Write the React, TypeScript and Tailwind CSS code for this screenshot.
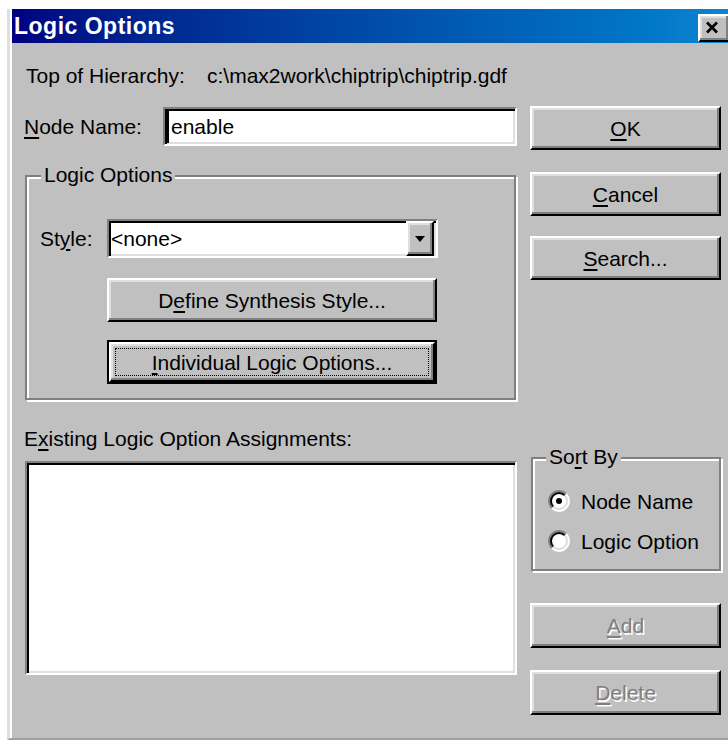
import type { ReactNode } from "react";

// Win98 bevels, drawn at double scale
const raised =
  "border-2 border-t-white border-l-white border-r-black border-b-black shadow-[inset_-2px_-2px_0_#808080,inset_2px_2px_0_#dfdfdf]";
const sunken =
  "border-2 border-t-[#808080] border-l-[#808080] border-r-white border-b-white shadow-[inset_2px_2px_0_#000,inset_-2px_-2px_0_#dfdfdf]";
const etched = "border-2 border-[#808080] shadow-[inset_2px_2px_0_#fff,2px_2px_0_#fff]";

const Key = ({ children }: { children: ReactNode }) => (
  <span className="underline decoration-2 underline-offset-[3px]">{children}</span>
);

type ButtonProps = {
  children: ReactNode;
  className?: string;
  disabled?: boolean;
  focused?: boolean;
};

const Button = ({ children, className = "", disabled, focused }: ButtonProps) => {
  const face = (
    <span
      className={`flex h-full w-full items-center justify-center ${
        disabled ? "text-[#808080] [text-shadow:1.5px_1.5px_0_#fff]" : "text-black"
      }`}
    >
      {children}
    </span>
  );

  if (focused) {
    return (
      <div className={`border-2 border-black bg-[#c0c0c0] ${className}`}>
        <div className={`h-full w-full p-[4px] ${raised}`}>
          <div className="h-full w-full border border-dotted border-black">{face}</div>
        </div>
      </div>
    );
  }

  return <div className={`bg-[#c0c0c0] ${raised} ${className}`}>{face}</div>;
};

const GroupBox = ({
  label,
  labelLeft,
  className = "",
  children,
}: {
  label: ReactNode;
  labelLeft: string;
  className?: string;
  children: ReactNode;
}) => (
  <div className={`relative ${etched} ${className}`}>
    <span className={`absolute top-[-14px] ${labelLeft} bg-[#c0c0c0] px-[3px] leading-[24px]`}>
      {label}
    </span>
    {children}
  </div>
);

const Radio = ({ checked }: { checked?: boolean }) => (
  <svg width="22" height="22" viewBox="0 0 22 22" className="shrink-0">
    <circle cx="11" cy="11" r="9" fill="#fff" />
    <path d="M3.93 18.07 A10 10 0 0 1 18.07 3.93" stroke="#808080" strokeWidth="2" fill="none" />
    <path d="M18.07 3.93 A10 10 0 0 1 3.93 18.07" stroke="#fff" strokeWidth="2" fill="none" />
    <path d="M5.34 16.66 A8 8 0 0 1 16.66 5.34" stroke="#000" strokeWidth="2" fill="none" />
    <path d="M16.66 5.34 A8 8 0 0 1 5.34 16.66" stroke="#dfdfdf" strokeWidth="2" fill="none" />
    {checked && <circle cx="11" cy="11" r="3" fill="#000" />}
  </svg>
);

const TitleBar = () => (
  <div className="flex h-[34px] shrink-0 items-center justify-between bg-gradient-to-r from-[#000080] to-[#1084d0] pl-[2px]">
    <span className="text-[23px] font-bold tracking-[0.5px] text-white">Logic Options</span>
    <div
      className={`mr-[-2px] mt-[3px] flex h-[28px] w-[32px] items-center justify-center bg-[#c0c0c0] ${raised}`}
    >
      <svg width="14" height="13" viewBox="0 0 14 13" className="mr-[4px]">
        <path d="M2 1.5 L12 11.5 M12 1.5 L2 11.5" stroke="#000" strokeWidth="2.6" />
      </svg>
    </div>
  </div>
);

export default function App() {
  return (
    <div className="h-[740px] w-[728px] overflow-hidden bg-white pl-[7px] pt-[9px] font-['Liberation_Sans',Arial,sans-serif] text-[21px] leading-none text-black">
      <div className="h-[731px] border-b-2 border-l-[3px] border-b-[#a0a0a0] border-l-[#dfdfdf]">
        <div className="flex h-full flex-col border-l-2 border-white bg-[#c0c0c0]">
          <TitleBar />

          <div className="pl-[12px]">
            <div className="mt-[21px] flex h-[22px] items-center pl-[2px]">
              <span className="w-[181px]">Top of Hierarchy:</span>
              <span>{"c:\\max2work\\chiptrip\\chiptrip.gdf"}</span>
            </div>

            <div className="mt-[20px] flex">
              {/* left column */}
              <div className="w-[493px]">
                <div className="flex h-[44px] items-start">
                  <span className="mt-[1px] flex h-[39px] w-[139px] items-center">
                    <Key>N</Key>ode Name:
                  </span>
                  <div className={`mt-[1px] flex h-[39px] w-[354px] items-center bg-white pl-[2px] ${sunken}`}>
                    <span className="h-[33px] w-[2px] bg-black" />
                    <span className="ml-[2px]">enable</span>
                  </div>
                </div>

                <GroupBox
                  label="Logic Options"
                  labelLeft="left-[14px]"
                  className="ml-[1px] mt-[25px] h-[225px] w-[491px]"
                >
                  <div className="flex items-center pl-[13px] pt-[42px]">
                    <span className="w-[67px]">
                      St<Key>y</Key>le:
                    </span>
                    <div className={`flex h-[39px] w-[331px] items-center bg-white ${sunken}`}>
                      <span className="flex-1 pl-[2px]">&lt;none&gt;</span>
                      <div
                        className={`mr-[2px] flex h-[35px] w-[28px] items-center justify-center bg-[#c0c0c0] ${raised}`}
                      >
                        <svg width="10" height="6" viewBox="0 0 10 6">
                          <path d="M0 0 H10 L5 6 Z" fill="#000" />
                        </svg>
                      </div>
                    </div>
                  </div>
                  <Button className="ml-[80px] mt-[20px] h-[44px] w-[330px]">
                    D<Key>e</Key>fine Synthesis Style...
                  </Button>
                  <Button focused className="ml-[80px] mt-[18px] h-[44px] w-[330px]">
                    <Key>I</Key>ndividual Logic Options...
                  </Button>
                </GroupBox>

                <div className="mt-[27px] flex h-[22px] items-center">
                  E<Key>x</Key>isting Logic Option Assignments:
                </div>
                <div className={`ml-[1px] mt-[12px] h-[214px] w-[492px] bg-white ${sunken}`} />
              </div>

              {/* right column */}
              <div className="ml-[13px] w-[191px]">
                <Button className="h-[44px] w-full">
                  <Key>O</Key>K
                </Button>
                <Button className="mt-[22px] h-[44px] w-full">
                  <Key>C</Key>ancel
                </Button>
                <Button className="mt-[20px] h-[44px] w-full">
                  <Key>S</Key>earch...
                </Button>

                <GroupBox
                  label={
                    <>
                      So<Key>r</Key>t By
                    </>
                  }
                  labelLeft="left-[13px]"
                  className="ml-[1px] mt-[177px] h-[114px] w-[190px]"
                >
                  <div className="pl-[15px] pt-[22px]">
                    <div className="flex h-[40px] items-center">
                      <Radio checked />
                      <span className="ml-[11px]">Node Name</span>
                    </div>
                    <div className="flex h-[40px] items-center">
                      <Radio />
                      <span className="ml-[11px]">Logic Option</span>
                    </div>
                  </div>
                </GroupBox>

                <Button disabled className="mt-[32px] h-[45px] w-full">
                  <Key>A</Key>dd
                </Button>
                <Button disabled className="mt-[22px] h-[45px] w-full">
                  <Key>D</Key>elete
                </Button>
              </div>
            </div>
          </div>
        </div>
      </div>
    </div>
  );
}
